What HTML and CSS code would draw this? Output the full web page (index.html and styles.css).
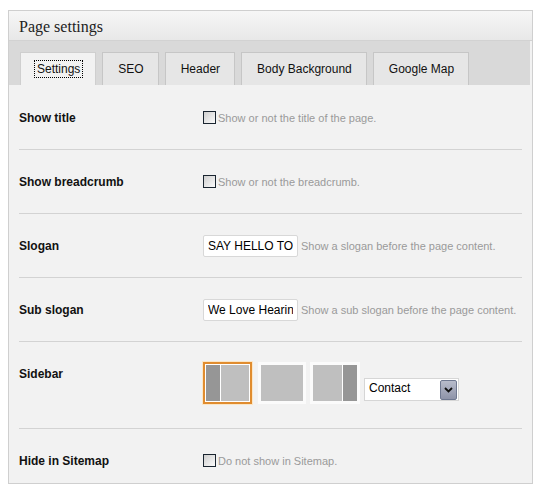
FILE: index.html
```html
<!DOCTYPE html>
<html>
<head>
<meta charset="utf-8">
<link rel="stylesheet" href="styles.css">
</head>
<body>
<div class="panel">
  <div class="panel-head">Page settings</div>
  <div class="tabs">
    <div class="tab active"><span class="focus">Settings</span></div>
    <div class="tab">SEO</div>
    <div class="tab">Header</div>
    <div class="tab">Body Background</div>
    <div class="tab">Google Map</div>
  </div>
  <div class="rows">
    <div class="row">
      <div class="label">Show title</div>
      <div class="value"><span class="check"></span><span class="desc">Show or not the title of the page.</span></div>
    </div>
    <div class="row">
      <div class="label">Show breadcrumb</div>
      <div class="value"><span class="check"></span><span class="desc">Show or not the breadcrumb.</span></div>
    </div>
    <div class="row">
      <div class="label">Slogan</div>
      <div class="value"><input class="input" type="text" value="SAY HELLO TO THE WORLD" readonly><span class="desc gap">Show a slogan before the page content.</span></div>
    </div>
    <div class="row">
      <div class="label">Sub slogan</div>
      <div class="value"><input class="input" type="text" value="We Love Hearing From You" readonly><span class="desc gap">Show a sub slogan before the page content.</span></div>
    </div>
    <div class="row row-sidebar">
      <div class="label">Sidebar</div>
      <div class="value value-sidebar">
        <span class="thumb selected"><span class="blk dark narrow"></span><span class="blk light wide"></span></span>
        <span class="thumb"><span class="blk light full"></span></span>
        <span class="thumb"><span class="blk light wide"></span><span class="blk dark narrow"></span></span>
        <span class="select"><span class="select-text">Contact</span><span class="select-btn"><svg width="9" height="6" viewBox="0 0 9 6"><path d="M1 1 L4.5 4.5 L8 1" fill="none" stroke="#111" stroke-width="1.8"/></svg></span></span>
      </div>
    </div>
    <div class="row row-last">
      <div class="label">Hide in Sitemap</div>
      <div class="value"><span class="check"></span><span class="desc">Do not show in Sitemap.</span></div>
    </div>
  </div>
</div>
</body>
</html>
```

FILE: styles.css
```css
html, body {
  margin: 0;
  padding: 0;
  background: #ffffff;
}
body {
  font-family: "Liberation Sans", Arial, sans-serif;
  font-size: 12px;
  color: #000;
}
.panel {
  margin: 10px 0 0 8px;
  width: 523px;
  border: 1px solid #cfcfcf;
  background: #f2f2f2;
}
.panel-head {
  height: 29px;
  line-height: 32px;
  padding-left: 10px;
  font-family: "Liberation Serif", "Times New Roman", serif;
  font-size: 16px;
  color: #222;
  background: linear-gradient(#f6f6f6, #e8e8e8);
  border-bottom: 1px solid #d2d2d2;
}
.tabs {
  display: flex;
  gap: 6px;
  height: 33px;
  padding: 11px 0 0 11px;
  margin-right: 2px;
  background: #d9d9d9;
}
.tab {
  height: 32px;
  line-height: 32px;
  padding: 0 14px 0 15px;
  border: 1px solid #c6c6c6;
  border-bottom: none;
  background: #e6e6e6;
  color: #111;
  font-size: 12px;
  white-space: nowrap;
}
.tab.active {
  background: #f2f2f2;
  border-color: #cfcfcf;
}
.focus {
  outline: 1px dotted #000;
  outline-offset: 1px;
  padding: 0 1px;
}
.rows {
  padding: 1px 10px 0;
}
.row {
  display: flex;
  align-items: flex-start;
  padding: 20px 0 19px;
  border-bottom: 1px solid #d3d3d3;
}
.row-sidebar {
  padding-bottom: 24px;
}
.row-last {
  border-bottom: none;
  padding-bottom: 10px;
}
.label {
  width: 184px;
  flex: none;
  line-height: 24px;
  font-weight: bold;
  font-size: 12px;
  color: #111;
}
.value {
  display: flex;
  align-items: center;
  height: 24px;
}
.check {
  width: 11px;
  height: 11px;
  border: 1px solid #1a2530;
  background: linear-gradient(135deg, #cfcfcf, #fbfbfb);
  margin-right: 2px;
  margin-top: -2px;
}
.desc {
  font-size: 11px;
  color: #9a9a9a;
}
.desc.gap {
  margin-left: 3px;
}
.input {
  display: block;
  box-sizing: border-box;
  width: 95px;
  height: 22px;
  margin: 0;
  padding: 0 4px;
  border: 1px solid #d8d8d8;
  border-radius: 2px;
  background: #fff;
  font-family: "Liberation Sans", Arial, sans-serif;
  font-size: 12px;
  color: #000;
  outline: none;
}
.value-sidebar {
  height: 42px;
  align-items: flex-end;
}
.thumb {
  display: flex;
  width: 42px;
  height: 36px;
  border: 3px solid #fbfbfb;
  margin-right: 4px;
  gap: 1px;
  background: #fff;
}
.thumb:nth-child(3) {
  width: 44px;
}
.thumb.selected {
  width: 43px;
  border: 2px solid #e08c2f;
  padding: 1px;
  box-shadow: 0 0 0 1px #fbe6c6;
  margin-right: 6px;
}
.blk.dark {
  background: #969696;
}
.blk.light {
  background: #bfbfbf;
}
.blk.narrow {
  width: 14px;
}
.blk.wide {
  flex: 1;
}
.blk.full {
  flex: 1;
}
.select {
  display: flex;
  align-items: center;
  justify-content: space-between;
  width: 93px;
  height: 21px;
  margin-bottom: 3px;
  border: 1px solid #d6d6d6;
  background: #fff;
}
.select-text {
  padding-left: 4px;
  font-size: 12px;
  color: #000;
  margin-top: -3px;
}
.select-btn {
  display: flex;
  align-items: center;
  justify-content: center;
  width: 15px;
  height: 18px;
  margin-right: 1px;
  border: 1px solid #6f7890;
  border-radius: 2px;
  background: linear-gradient(#b8bccb, #8e93a8);
}
```
